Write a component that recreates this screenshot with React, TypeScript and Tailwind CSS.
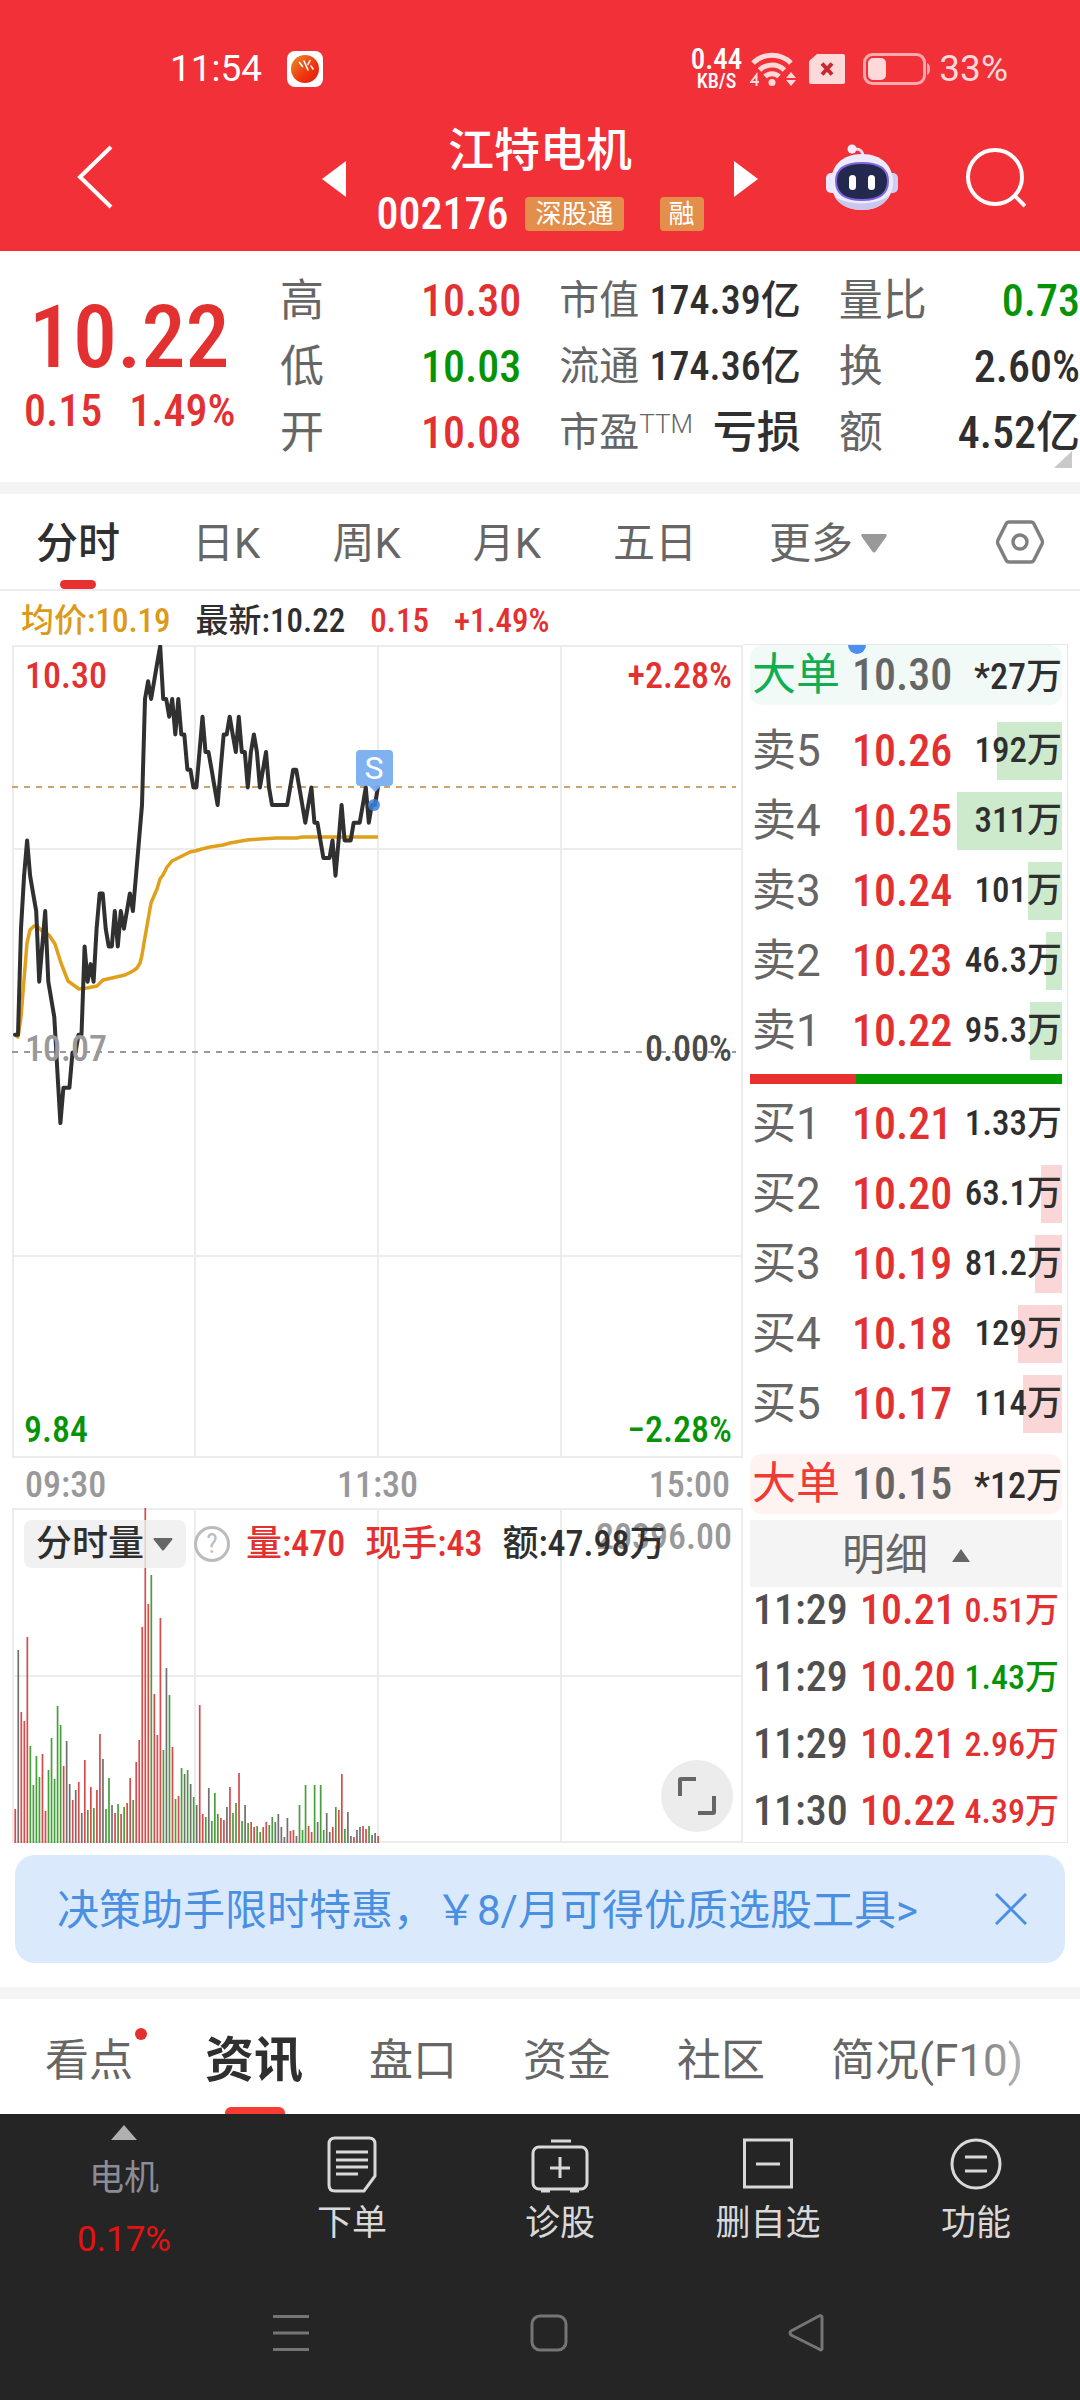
import type { ReactNode } from "react";

const UP = "text-[#e33030]";
const DOWN = "text-[#069406]";
const INK = "text-[#2f2f2f]";

const NUM = "font-['Roboto_Condensed',Roboto,'Noto_Sans_CJK_SC',sans-serif] font-medium";

interface Quote {
    label: string;
    sup?: string;
    value: string;
    tone: string;
}

const quoteColumns: Quote[][] = [
    [
        { label: "高", value: "10.30", tone: UP },
        { label: "低", value: "10.03", tone: DOWN },
        { label: "开", value: "10.08", tone: UP },
    ],
    [
        { label: "市值", value: "174.39亿", tone: INK },
        { label: "流通", value: "174.36亿", tone: INK },
        { label: "市盈", sup: "TTM", value: "亏损", tone: INK },
    ],
    [
        { label: "量比", value: "0.73", tone: DOWN },
        { label: "换", value: "2.60%", tone: INK },
        { label: "额", value: "4.52亿", tone: INK },
    ],
];

interface Level {
    label: string;
    price: string;
    volume: string;
    lots: number;
}

const asks: Level[] = [
    { label: "卖5", price: "10.26", volume: "192万", lots: 192 },
    { label: "卖4", price: "10.25", volume: "311万", lots: 311 },
    { label: "卖3", price: "10.24", volume: "101万", lots: 101 },
    { label: "卖2", price: "10.23", volume: "46.3万", lots: 46.3 },
    { label: "卖1", price: "10.22", volume: "95.3万", lots: 95.3 },
];

const bids: Level[] = [
    { label: "买1", price: "10.21", volume: "1.33万", lots: 0 },
    { label: "买2", price: "10.20", volume: "63.1万", lots: 63.1 },
    { label: "买3", price: "10.19", volume: "81.2万", lots: 81.2 },
    { label: "买4", price: "10.18", volume: "129万", lots: 129 },
    { label: "买5", price: "10.17", volume: "114万", lots: 114 },
];

const ticks = [
    { time: "11:29", price: "10.21", volume: "0.51万", tone: UP },
    { time: "11:29", price: "10.20", volume: "1.43万", tone: DOWN },
    { time: "11:29", price: "10.21", volume: "2.96万", tone: UP },
    { time: "11:30", price: "10.22", volume: "4.39万", tone: UP },
];

// minute prices, in cents below the day's high of 10.30
const prices = [
    22, 22, 16, 13, 11, 13, 14, 15, 19, 17, 15, 19, 20, 21, 24, 27, 25, 25, 25, 23, 23, 22, 22, 17, 19, 18, 19, 16, 14,
    14, 16, 17, 17, 15, 17, 15, 16, 15, 14, 15, 13, 11, 9, 3, 2, 3, 2, 1, 0, 3, 3, 4, 3, 5, 3, 5, 5, 7, 7, 8, 8, 6, 4,
    6, 6, 7, 8, 9, 7, 5, 5, 4, 5, 6, 4, 6, 6, 8, 6, 5, 6, 8, 7, 6, 8, 9, 9, 9, 9, 9, 9, 8, 7, 7, 8, 9, 10, 9, 8, 10,
    10, 11, 12, 12, 12, 11, 13, 11, 9, 11, 11, 11, 10, 10, 10, 9, 8, 10, 9, 9, 8,
];

const average =
    "3,390 6,392 9,372 12,335 15,298 18,285 22,281 25,281 30,286 37,290 43,299 49,318 56,336 67,344 75,343 85,341 91,335 100,333 113,330 121,326 125,323 128,318 130,310 133,292 139,258 145,244 148,234 151,230 155,222 160,216 170,211 178,207 183,206 190,204 198,202 211,200 218,198 235,195 248,194 265,193 285,193 290,192 366,192";

// minute volumes: r = up, g = down, k = flat
const volumes =
    "r34 k193 r131 r122 r206 g97 g58 g87 g66 r89 r32 g73 g105 g64 g137 g118 r77 k102 k59 r43 k53 r61 k30 r83 g33 r56 g35 r53 r109 k84 g34 g65 k38 r30 g39 r29 g36 r40 r65 g43 r81 r103 r216 r335 r239 g268 r149 r108 r225 g93 k175 g148 r96 g44 r47 g75 k69 g73 k59 g46 k38 r138 r29 g26 k55 g22 g50 g29 r25 r23 k36 r56 g30 g40 r70 g22 k38 g20 r21 r16 g17 g11 r16 r21 g18 g26 k21 k29 k16 k6 k25 r12 r13 k7 g38 g13 g58 r17 r11 g58 k21 g58 g13 k30 k11 r16 g36 r33 r69 g14 k31 k7 r6 k13 k16 r17 r14 g17 k8 k10 r7".split(
        " ",
    );

const barColors: Record<string, string> = { r: "#d94a4a", g: "#45a03a", k: "#707070" };

const STEP = 3.024;

const StatusBar = () => (
    <div className="flex h-[126px] items-center justify-between pt-3 pr-[72px] pl-[170px] text-white">
        <div className="flex items-center gap-[25px]">
            <span className="text-[37px] leading-10">11:54</span>
            <svg width="36" height="36" viewBox="0 0 36 36">
                <defs>
                    <linearGradient id="app" x1="0" y1="0" x2="1" y2="1">
                        <stop offset="0" stopColor="#e8912a" />
                        <stop offset="0.6" stopColor="#f0330f" />
                        <stop offset="1" stopColor="#d81f0c" />
                    </linearGradient>
                </defs>
                <rect width="36" height="36" rx="8" fill="#fff" />
                <circle cx="18" cy="18" r="14" fill="url(#app)" />
                <path d="M12.500 11.500l3 4M17 10l4 9M23 9.500l-2 4M24 15l2 3" stroke="#fff" strokeWidth="1.600" strokeLinecap="round" fill="none" />
            </svg>
        </div>
        <div className="flex items-center gap-[8px]">
            <div className={`${NUM} text-center`}>
                <div className="text-[29px] leading-6">0.44</div>
                <div className="text-[20px] leading-5">KB/S</div>
            </div>
            <svg width="46" height="36" viewBox="0 0 46 36" fill="none" stroke="#fdd9da">
                <path d="M3 12a27 27 0 0 1 38 0" strokeWidth="5" />
                <path d="M9.500 19a18 18 0 0 1 25 0" strokeWidth="5" />
                <path d="M15 25.500a10 10 0 0 1 14 0" strokeWidth="5" />
                <circle cx="22" cy="31.500" r="3.500" fill="#fdd9da" stroke="none" />
                <path d="M6.500 35V24L1 31h8" strokeWidth="2" />
                <path d="M41 21l5 6H36zM41 35l5-6H36z" fill="#fdd9da" stroke="none" />
            </svg>
            <svg className="ml-[5px]" width="36" height="30" viewBox="0 0 36 30">
                <path d="M8 0h26a2 2 0 0 1 2 2v26a2 2 0 0 1-2 2H2a2 2 0 0 1-2-2V7z" fill="#fdd9da" />
                <path d="M13 9.500l10 11M23 9.500l-10 11" stroke="#c9282f" strokeWidth="4" />
            </svg>
            <svg className="ml-[10px]" width="68" height="32" viewBox="0 0 68 32">
                <rect x="1.500" y="1.500" width="60" height="29" rx="8" fill="none" stroke="#fcaaad" strokeWidth="3" />
                <rect x="5" y="5" width="18" height="22" rx="5" fill="#fdd9da" />
                <path d="M64 10q3 1 3 6t-3 6z" fill="#fcaaad" />
            </svg>
            <span className="text-[37px] leading-10 text-[#fdd9da]">33%</span>
        </div>
    </div>
);

const Robot = () => (
    <svg width="72" height="68" viewBox="0 0 72 68">
        <path d="M28 5q9-1 9 8" stroke="#e6def5" strokeWidth="3" fill="none" />
        <circle cx="26" cy="5" r="4.500" fill="#f3eefc" />
        <rect x="0" y="29" width="12" height="20" rx="5" fill="#e9e7fb" />
        <rect x="60" y="29" width="12" height="20" rx="5" fill="#cfcdf2" />
        <path d="M36 10c20 0 31 12 31 28S55 66 36 66 5 54 5 38s11-28 31-28z" fill="#edeafc" />
        <path d="M8 52c12 10 44 10 56-1-5 10-15 15-28 15S13 61 8 52z" fill="#c9c7ee" />
        <path d="M36 19c18 0 26 6 26 18s-7 19-26 19S10 49 10 37s8-18 26-18z" fill="#23284f" stroke="#7d66dd" strokeWidth="2" />
        <rect x="23" y="31" width="7" height="15" rx="3.500" fill="#fff" />
        <rect x="42" y="31" width="7" height="15" rx="3.500" fill="#fff" />
    </svg>
);

const Header = () => (
    <header className="bg-[#f13038]">
        <StatusBar />
        <div className="grid grid-cols-[1fr_auto_1fr] items-start pb-[17px] text-white">
            <button aria-label="返回" className="flex h-[102px] items-center pl-[76px]">
                <svg width="38" height="64" viewBox="0 0 38 64" fill="none" stroke="#fff" strokeWidth="4">
                    <path d="M35 2L4 32l31 30" />
                </svg>
            </button>
            <div className="flex gap-[30px]">
                <button aria-label="上一只" className="flex h-[106px] items-center">
                    <svg width="24" height="36" viewBox="0 0 24 36">
                        <path d="M24 0v36L0 18z" fill="#fff" />
                    </svg>
                </button>
                <div>
                    <h1 className="text-center text-[46px] leading-[48px] font-medium">江特电机</h1>
                    <div className="mt-5 flex h-10 items-center">
                        <span className={`${NUM} text-[44px]`}>002176</span>
                        <span className="ml-[17px] rounded-sm bg-[#e38e4b] px-[10px] text-[26px] leading-[34px]">深股通</span>
                        <span className="ml-9 rounded-sm bg-[#e38e4b] px-[9px] text-[26px] leading-[34px]">融</span>
                    </div>
                </div>
                <button aria-label="下一只" className="flex h-[106px] items-center">
                    <svg width="24" height="36" viewBox="0 0 24 36">
                        <path d="M0 0v36l24-18z" fill="#fff" />
                    </svg>
                </button>
            </div>
            <div className="flex h-[104px] items-center justify-end gap-[66px] pr-[54px]">
                <button aria-label="智能助手">
                    <Robot />
                </button>
                <button aria-label="搜索">
                    <svg width="62" height="60" viewBox="0 0 62 60" fill="none" stroke="#fff" strokeWidth="4">
                        <circle cx="31" cy="29" r="27" />
                        <path d="M50 47l11 11" />
                    </svg>
                </button>
            </div>
        </div>
    </header>
);

const QuotePanel = () => (
    <section className="relative grid grid-cols-[242px_1fr_1fr_1fr] gap-x-[38px] pt-[17px] pb-4">
        <div className={`${NUM} ${UP} pl-[24px]`}>
            <div className="mt-[25px] pl-[5px] text-[88px] leading-[88px]">10.22</div>
            <div className="mt-[5px] flex gap-[27px] text-[44px] leading-[50px]">
                <span>0.15</span>
                <span>1.49%</span>
            </div>
        </div>
        {quoteColumns.map((column, c) => (
            <dl key={c}>
                {column.map((q) => (
                    <div key={q.label} className="flex h-[66px] items-center justify-between">
                        <dt className={`text-[#666] ${c === 1 ? "text-[40px]" : "text-[44px]"} flex leading-[50px]`}>
                            {q.label}
                            {q.sup && <span className="text-[26px] leading-8 font-light">{q.sup}</span>}
                        </dt>
                        <dd className={`${NUM} ${q.tone} ${c === 1 && !q.sup ? "text-[40px]" : "text-[44px]"} leading-[50px]`}>{q.value}</dd>
                    </div>
                ))}
            </dl>
        ))}
        <svg className="absolute right-2 bottom-[14px]" width="18" height="17" viewBox="0 0 18 17">
            <path d="M18 0v17H0z" fill="#c9c9c9" />
        </svg>
    </section>
);

const PeriodTabs = () => (
    <nav className="flex h-[97px] items-center border-b-2 border-[#ececec] pr-9 pl-[36px] text-[42px] text-[#666]">
        <div className="flex items-center gap-[72px]">
            <button className={`relative flex h-[95px] items-center pt-1 font-medium ${INK}`}>
                分时
                <span className="absolute bottom-0 left-[24px] h-[9px] w-9 rounded-full bg-[#e83030]" />
            </button>
            {["日K", "周K", "月K", "五日"].map((tab) => (
                <button key={tab} className="pt-1">
                    {tab}
                </button>
            ))}
            <button className="flex items-center gap-[8px] pt-1">
                更多
                <svg width="26" height="19" viewBox="0 0 26 19">
                    <path d="M2 0h22q3 0 1 3L15 17q-2 3-4 0L1 3Q-1 0 2 0z" fill="#999" />
                </svg>
            </button>
        </div>
        <button aria-label="设置" className="ml-auto">
            <svg width="48" height="44" viewBox="0 0 48 44" fill="none" stroke="#808080" strokeWidth="3.500">
                <path d="M13 2h22q2 0 3 2l8 16q1 2 0 4l-8 16q-1 2-3 2H13q-2 0-3-2L2 24q-1-2 0-4l8-16q1-2 3-2z" />
                <circle cx="24" cy="22" r="7" />
            </svg>
        </button>
    </nav>
);

const Grid = ({ height, lines }: { height: number; lines: number[] }) => (
    <g stroke="#ececec" strokeWidth="2" fill="none">
        <rect x="1" y="1" width="729" height={height - 2} />
        {[183, 366, 549].map((x) => (
            <path key={x} d={`M${x} 0V${height}`} />
        ))}
        {lines.map((y) => (
            <path key={y} d={`M0 ${y}H731`} />
        ))}
    </g>
);

const PriceChart = () => (
    <div className={`${NUM} relative text-[36px] leading-[40px]`}>
        <svg className="block h-auto w-full" viewBox="0 0 731 813">
            <Grid height={813} lines={[204, 611]} />
            <path d="M0 142H724" stroke="#c9a56b" strokeWidth="2" strokeDasharray="6 6" />
            <path d="M0 407H724" stroke="#999" strokeWidth="2" strokeDasharray="6 6" />
            <polyline points={average} fill="none" stroke="#e0a01c" strokeWidth="3.500" strokeLinejoin="round" />
            <polyline
                points={prices.map((p, i) => `${(3 + i * STEP).toFixed(1)},${(1 + p * 17.67).toFixed(1)}`).join(" ")}
                fill="none"
                stroke="#303030"
                strokeWidth="4"
                strokeLinejoin="round"
                strokeLinecap="round"
            />
            <path d="M348 105h29q4 0 4 4v28q0 4-4 4h-8l-6 6-6-6h-9q-4 0-4-4v-28q0-4 4-4z" fill="#76acf1" fillOpacity="0.93" />
            <circle cx="362" cy="160" r="6" fill="#3b82dc" fillOpacity="0.85" />
            <text x="362" y="134" textAnchor="middle" fill="#fff" fontSize="32" fontFamily="Roboto" fontWeight="400">
                S
            </text>
        </svg>
        <span className={`${UP} absolute top-[11px] left-[13px]`}>10.30</span>
        <span className={`${UP} absolute top-[11px] right-[11px]`}>+2.28%</span>
        <span className="absolute top-1/2 left-[13px] -mt-[23px] text-[#999]">10.07</span>
        <span className="absolute top-1/2 right-[11px] -mt-[23px] text-[#4a4a4a]">0.00%</span>
        <span className={`${DOWN} absolute bottom-[8px] left-[12px]`}>9.84</span>
        <span className={`${DOWN} absolute right-[11px] bottom-[8px]`}>−2.28%</span>
    </div>
);

const VolumeChart = () => (
    <div className={`${NUM} relative text-[36px] leading-[48px]`}>
        <svg className="block h-auto w-full" viewBox="0 0 731 335">
            <Grid height={335} lines={[168]} />
            {volumes.map((v, i) => {
                const h = Number(v.slice(1));
                return <rect key={i} x={2.4 + i * STEP} y={335 - h} width="1.700" height={h} fill={barColors[v[0]]} />;
            })}
        </svg>
        <span className="absolute top-[5px] right-[11px] text-[#999]">20396.00</span>
        <div className="absolute top-3 left-3 flex items-center">
            <button className={`flex items-center gap-[9px] rounded-lg bg-[#eee]/80 pr-[13px] pl-[12px] ${INK}`}>
                分时量
                <svg width="20" height="13" viewBox="0 0 20 13">
                    <path d="M1 0h18q1 1 0 2l-8 10q-1 1-2 0L1 2Q0 1 1 0z" fill="#666" />
                </svg>
            </button>
            <button aria-label="说明" className="ml-2 flex size-9 items-center justify-center rounded-full border-3 border-[#bcbcbc] text-[27px] leading-none font-normal text-[#bcbcbc]">
                ?
            </button>
            <span className={`ml-4 ${UP}`}>量:470</span>
            <span className={`ml-5 ${UP}`}>现手:43</span>
            <span className={`ml-5 ${INK}`}>额:47.98万</span>
        </div>
        <button aria-label="全屏" className="absolute right-[10px] bottom-[11px] flex size-[72px] items-center justify-center rounded-full bg-[#ececec]">
            <svg width="38" height="38" viewBox="0 0 38 38" fill="none" stroke="#666" strokeWidth="4">
                <path d="M2 19V3q0-1 1-1h15M36 19v16q0 1-1 1H20" />
            </svg>
        </button>
    </div>
);

const Levels = ({ title, rows, bar }: { title: string; rows: Level[]; bar: string }) => (
    <table aria-label={title} className="w-full table-fixed">
        <tbody>
            {rows.map((row) => (
                <tr key={row.label} className="h-[70px]">
                    <th scope="row" className="w-[102px] pl-[2px] text-left text-[44px] leading-[50px] font-normal text-[#666]">
                        {row.label}
                    </th>
                    <td className={`${NUM} ${UP} w-[98px] text-[44px] leading-[50px]`}>{row.price}</td>
                    <td className={`${NUM} ${INK} relative text-right text-[35px] leading-[50px] whitespace-nowrap`}>
                        <span className={`absolute inset-y-[6px] right-0 ${bar}`} style={{ width: Math.round(row.lots * 0.338) }} />
                        <span className="relative">{row.volume}</span>
                    </td>
                </tr>
            ))}
        </tbody>
    </table>
);

const BigOrder = ({ price, volume, tone, children }: { price: string; volume: string; tone: string; children?: ReactNode }) => (
    <div className={`relative flex h-[60px] items-center overflow-hidden rounded-xl pl-[2px] leading-[50px] ${tone}`}>
        {children}
        <span className="w-[100px] text-[44px]">大单</span>
        <span className={`${NUM} relative text-[44px] text-[#666]`}>{price}</span>
        <span className={`${NUM} ${INK} ml-auto pt-1 text-[36px]`}>{volume}</span>
    </div>
);

const OrderBook = () => (
    <aside className="mr-3 w-[325px] shrink-0 border border-l-0 border-[#e8e8e8] pr-[5px] pl-[7px]">
        <BigOrder price="10.30" volume="*27万" tone="bg-[#f1faf6] text-[#0fae53]">
            <span className="absolute -top-[9px] left-[98px] size-[18px] rounded-full bg-[#4a90ee]" />
        </BigOrder>
        <div className="mt-[11px]">
            <Levels title="卖盘" rows={asks} bar="bg-[#cdeacd]" />
        </div>
        <div className="mt-2 flex h-[10px] bg-[#039903]">
            <div className="w-[34%] bg-[#e83030]" />
        </div>
        <div className="mt-[5px]">
            <Levels title="买盘" rows={bids} bar="bg-[#fad6d6]" />
        </div>
        <div className="mt-[15px]">
            <BigOrder price="10.15" volume="*12万" tone="bg-[#fff3f2] text-[#f03a34]" />
        </div>
        <button className="mt-[6px] flex h-[67px] w-full items-center justify-center gap-6 bg-[#f4f4f4] pt-1 text-[43px] text-[#666]">
            明细
            <svg width="18" height="13" viewBox="0 0 18 13">
                <path d="M9 0l9 13H0z" fill="#666" />
            </svg>
        </button>
        <table aria-label="明细" className={`${NUM} w-full table-fixed leading-[46px]`}>
            <tbody>
                {ticks.map((t, i) => (
                    <tr key={i}>
                        <td className={`w-[110px] pl-[3px] text-[42px] text-[#505050] ${i > 0 ? "pt-[21px]" : ""}`}>{t.time}</td>
                        <td className={`w-[94px] text-[42px] ${UP} ${i > 0 ? "pt-[21px]" : ""}`}>{t.price}</td>
                        <td className={`pr-[3px] text-right text-[34px] whitespace-nowrap ${t.tone} ${i > 0 ? "pt-[21px]" : ""}`}>{t.volume}</td>
                    </tr>
                ))}
            </tbody>
        </table>
    </aside>
);

const Promo = () => (
    <div className="mx-[15px] mt-3 mb-6 flex h-[108px] items-center justify-between rounded-[20px] bg-[#dae9fc] pr-[38px] pl-[42px] text-[#4a90e2]">
        <a href="#promo" className="pt-[3px] text-[42px] leading-[60px] whitespace-nowrap">
            决策助手限时特惠，￥8/月可得优质选股工具&gt;
        </a>
        <button aria-label="关闭">
            <svg width="32" height="32" viewBox="0 0 32 32" stroke="#4a90e2" strokeWidth="3">
                <path d="M1 1l30 30M31 1L1 31" />
            </svg>
        </button>
    </div>
);

const SectionTabs = () => (
    <nav className="relative flex h-[115px] gap-[66px] pl-[45px] text-[44px] whitespace-nowrap text-[#666]">
        <button className="relative pt-2 pr-[6px]">
            看点
            <span className="absolute top-[29px] -right-[8px] size-3 rounded-full bg-[#e33030]" />
        </button>
        <button className={`relative pt-2 text-[49px] font-bold ${INK}`}>
            资讯
            <span className="absolute bottom-0 left-[20px] h-[7px] w-[60px] rounded-t-md bg-[#f83c34]" />
        </button>
        {["盘口", "资金", "社区", "简况(F10)"].map((tab) => (
            <button key={tab} className="pt-2">
                {tab}
            </button>
        ))}
        <div className="pointer-events-none absolute inset-y-0 right-0 w-[120px] bg-linear-to-l from-white to-white/0" />
    </nav>
);

const actions = [
    {
        label: "下单",
        icon: (
            <>
                <path d="M8 2h34q6 0 6 6v32L37 55H8q-6 0-6-6V8q0-6 6-6z" />
                <path d="M9 16h32M9 24h32M9 31h32M9 38h22" />
            </>
        ),
    },
    {
        label: "诊股",
        icon: (
            <>
                <rect x="-2" y="11" width="54" height="42" rx="6" />
                <path d="M16 5h20M25 21v21M15 32h20M6 55h9M35 55h9" />
            </>
        ),
    },
    {
        label: "删自选",
        icon: (
            <>
                <rect x="1.500" y="4" width="47" height="47" />
                <path d="M13 28h24" />
            </>
        ),
    },
    {
        label: "功能",
        icon: (
            <>
                <circle cx="25" cy="28" r="24" />
                <path d="M14 21h22M14 35h22" />
            </>
        ),
    },
];

const BottomBar = () => (
    <footer className="flex flex-1 flex-col bg-[#252525] text-[#d9d9d9]">
        <div className="grid grid-cols-[248px_1fr_1fr_1fr_1fr]">
            <button className="flex flex-col items-center pt-[11px] text-[35px] text-[#8b8c96]">
                <svg width="26" height="15" viewBox="0 0 26 15">
                    <path d="M13 0l13 15H0z" fill="#b0b0b0" />
                </svg>
                <span className="mt-[17px] leading-[44px]">电机</span>
                <span className="mt-[17px] leading-[44px] text-[#e51212]">0.17%</span>
            </button>
            {actions.map((action) => (
                <button key={action.label} className="flex flex-col items-center pt-[22px] text-[35px]">
                    <svg className="overflow-visible" width="50" height="57" viewBox="0 0 50 57" fill="none" stroke="#d9d9d9" strokeWidth="3">
                        {action.icon}
                    </svg>
                    <span className="mt-[6px] leading-[50px]">{action.label}</span>
                </button>
            ))}
        </div>
        <div className="mt-[52px] flex justify-center gap-[220px] pl-[18px]">
            <button aria-label="最近任务">
                <svg width="38" height="38" viewBox="0 0 38 38" stroke="#757575" strokeWidth="3">
                    <path d="M1 2.500h36M1 19h36M1 35.500h36" />
                </svg>
            </button>
            <button aria-label="主屏幕">
                <svg width="38" height="38" viewBox="0 0 38 38" fill="none" stroke="#757575" strokeWidth="3">
                    <rect x="2" y="2" width="34" height="34" rx="8" />
                </svg>
            </button>
            <button aria-label="返回上级">
                <svg width="38" height="38" viewBox="0 0 38 38" fill="none" stroke="#757575" strokeWidth="3" strokeLinejoin="round">
                    <path d="M34 3v32q-1 2-3 0L3 21q-2-2 0-4L31 2q2-1 3 1z" />
                </svg>
            </button>
        </div>
    </footer>
);

const App = () => (
    <div className="flex min-h-screen flex-col bg-white font-[Roboto,'Noto_Sans_CJK_SC',sans-serif]">
        <Header />
        <QuotePanel />
        <div className="h-3 bg-[#f4f4f4]" />
        <PeriodTabs />
        <div className={`${NUM} flex h-[53px] items-center gap-[25px] pt-[7px] pl-[21px] text-[33px] ${UP}`}>
            <span className="text-[#dd9a1a]">均价:10.19</span>
            <span className={INK}>最新:10.22</span>
            <span>0.15</span>
            <span>+1.49%</span>
        </div>
        <main className="flex">
            <div className="min-w-0 flex-1 pt-px pl-3">
                <PriceChart />
                <div className={`${NUM} grid h-[50px] grid-cols-3 items-center px-[13px] text-[36px] text-[#999]`}>
                    <span>09:30</span>
                    <span className="text-center">11:30</span>
                    <span className="text-right">15:00</span>
                </div>
                <VolumeChart />
            </div>
            <OrderBook />
        </main>
        <Promo />
        <div className="h-3 bg-[#f4f4f4]" />
        <SectionTabs />
        <BottomBar />
    </div>
);

export default App;
